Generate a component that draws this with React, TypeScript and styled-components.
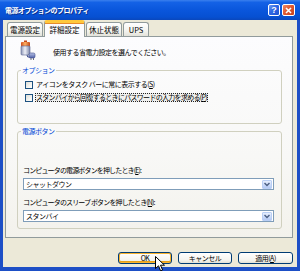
import React from 'react';
import styled, { createGlobalStyle, css } from 'styled-components';

const GlobalStyle = createGlobalStyle`
  html, body {
    margin: 0;
    padding: 0;
    width: 300px;
    height: 271px;
    overflow: hidden;
    background: #ECE9D8;
  }
  * {
    box-sizing: border-box;
  }
`;

const font = `'Noto Sans CJK JP', 'Liberation Sans', sans-serif`;

const Window = styled.div`
  position: relative;
  width: 300px;
  height: 271px;
  display: flex;
  flex-direction: column;
  background: #1d4fc6;
  font-family: ${font};
  font-size: 7px;
  letter-spacing: -0.5px;
  color: #000;
`;

const TitleBar = styled.div`
  height: 20px;
  flex: none;
  display: flex;
  align-items: center;
  justify-content: space-between;
  padding: 0 5px 0 5px;
  background: linear-gradient(
    to bottom,
    #3a80ee 0%,
    #1462e6 12%,
    #0a56dc 50%,
    #0650d2 85%,
    #0a47bc 100%
  );
`;

const Title = styled.div`
  color: #fff;
  font-weight: bold;
  font-size: 7px;
  line-height: 10px;
  text-shadow: 1px 1px 0 #0b2f8a;
`;

const CaptionButtons = styled.div`
  display: flex;
  gap: 2px;
`;

const CaptionButton = styled.div<{ $close?: boolean }>`
  width: 12px;
  height: 12px;
  border: 1px solid #fff;
  border-radius: 2px;
  display: flex;
  align-items: center;
  justify-content: center;
  color: #fff;
  font-family: 'Liberation Sans', sans-serif;
  font-weight: bold;
  font-size: 9px;
  letter-spacing: 0;
  line-height: 10px;
  ${({ $close }) =>
    $close
      ? css`
          width: 13px;
          background: linear-gradient(135deg, #ef8a68 0%, #e05a32 45%, #c9401c 100%);
        `
      : css`
          background: linear-gradient(135deg, #6e9af0 0%, #2e67e4 45%, #1f53d0 100%);
        `}
`;

const Body = styled.div`
  flex: 1;
  display: flex;
  flex-direction: column;
  margin: 0 3px 4px 3px;
  padding: 0 4px 3px 2px;
  background: #ece9d8;
`;

const TabStrip = styled.div`
  height: 16px;
  display: flex;
  align-items: flex-end;
  padding-left: 2px;
  gap: 1px;
  position: relative;
  z-index: 1;
`;

const Tab = styled.div<{ $active?: boolean; $w: number }>`
  width: ${({ $w }) => $w}px;
  height: 14px;
  display: flex;
  align-items: center;
  justify-content: center;
  border: 1px solid #919b9c;
  border-bottom: none;
  border-radius: 3px 3px 0 0;
  background: linear-gradient(to bottom, #ffffff 0%, #f3f3ef 60%, #e3e2da 100%);
  white-space: nowrap;
  font-size: 7.5px;
  letter-spacing: 0;
  line-height: 10px;
  ${({ $active }) =>
    $active &&
    css`
      height: 17px;
      margin-bottom: -1px;
      padding-bottom: 1px;
      background: #fcfcfe;
      border-top: 3px solid #ffc83c;
      box-shadow: inset 0 1px 0 #e68b2c;
    `}
`;

const Panel = styled.div`
  height: 202px;
  display: flex;
  flex-direction: column;
  border: 1px solid #919b9c;
  padding: 3px 10px 0 11px;
  background: linear-gradient(to bottom, #fcfcfe 0%, #f8f8f6 60%, #f3f2ec 100%);
`;

const Intro = styled.div`
  height: 20px;
  display: flex;
  align-items: flex-start;
  padding-left: 1px;
`;

const IntroText = styled.div`
  margin-left: 16px;
  padding-top: 8px;
  line-height: 9px;
`;

const Group = styled.fieldset<{ $top: number; $height: number }>`
  margin: ${({ $top }) => $top}px 0 0 0;
  height: ${({ $height }) => $height}px;
  padding: 0 7px 0 5px;
  border: 1px solid #d0d0bf;
  border-radius: 3px;
  display: flex;
  flex-direction: column;
  min-width: 0;
`;

const Legend = styled.legend`
  color: #0046d5;
  padding: 0 1px;
  margin-left: -2px;
  line-height: 9px;
`;

const CheckRow = styled.label<{ $top: number }>`
  display: flex;
  align-items: center;
  height: 9px;
  margin: ${({ $top }) => $top}px 0 0 2px;
  line-height: 9px;
  white-space: nowrap;
`;

const CheckBox = styled.span`
  width: 8px;
  height: 8px;
  flex: none;
  border: 1px solid #1c5180;
  background: linear-gradient(135deg, #dcdcd6 0%, #f4f4f0 60%, #ffffff 100%);
  margin-right: 2px;
`;

const CheckText = styled.span<{ $focus?: boolean }>`
  padding: 0 1px;
  ${({ $focus }) =>
    $focus &&
    css`
      letter-spacing: -0.7px;
      outline: 1px dotted #222;
      outline-offset: -1px;
      background: #f0f0ee;
    `}
`;

const FieldLabel = styled.div<{ $top: number }>`
  margin-top: ${({ $top }) => $top}px;
  line-height: 9px;
  letter-spacing: -0.85px;
  white-space: nowrap;
`;

const Combo = styled.div<{ $top: number }>`
  margin-top: ${({ $top }) => $top}px;
  height: 12px;
  display: flex;
  align-items: center;
  border: 1px solid #7f9db9;
  background: #fff;
  padding: 0 1px 0 2px;
`;

const ComboValue = styled.span`
  flex: 1;
  line-height: 9px;
`;

const ComboButton = styled.span`
  width: 10px;
  height: 9px;
  display: flex;
  align-items: center;
  justify-content: center;
  border: 1px solid #b9cff5;
  border-radius: 1px;
  background: linear-gradient(to bottom, #e6eefc 0%, #c9dafa 60%, #b4c9f3 100%);
`;

const ButtonRow = styled.div`
  display: flex;
  justify-content: flex-end;
  gap: 6px;
  margin-top: 14px;
`;

const Button = styled.div<{ $hover?: boolean; $w: number }>`
  width: ${({ $w }) => $w}px;
  height: 12px;
  display: flex;
  align-items: center;
  justify-content: center;
  border: 1px solid #003c74;
  border-radius: 3px;
  background: linear-gradient(to bottom, #ffffff 0%, #f5f4ef 70%, #e3e1d6 100%);
  line-height: 9px;
  ${({ $hover }) =>
    $hover &&
    css`
      box-shadow: inset 0 0 0 1px #f8b330, inset 0 -1px 0 1px #e5a01a;
    `}
`;

const Cursor = styled.svg`
  position: absolute;
  left: 155px;
  top: 256px;
`;

const Chevron = () => (
  <svg width="6" height="5" viewBox="0 0 6 5">
    <path d="M0.5 1 L3 3.6 L5.5 1" fill="none" stroke="#4d6185" strokeWidth="1.4" />
  </svg>
);

const PowerIcon = () => (
  <svg width="19" height="20" viewBox="0 0 19 20">
    <defs>
      <linearGradient id="bat" x1="0" x2="1" y1="0" y2="0">
        <stop offset="0" stopColor="#8c95b5" />
        <stop offset="0.45" stopColor="#eef0f8" />
        <stop offset="1" stopColor="#7b84a6" />
      </linearGradient>
      <linearGradient id="cap" x1="0" x2="1" y1="0" y2="0">
        <stop offset="0" stopColor="#d04a1c" />
        <stop offset="0.45" stopColor="#ffb060" />
        <stop offset="1" stopColor="#c2461a" />
      </linearGradient>
      <linearGradient id="plug" x1="0" x2="0" y1="0" y2="1">
        <stop offset="0" stopColor="#b9c3e6" />
        <stop offset="1" stopColor="#4d5fa8" />
      </linearGradient>
    </defs>
    <rect x="6" y="0.5" width="3" height="1.5" fill="#c2461a" />
    <rect x="3" y="2" width="9" height="5" rx="1" fill="url(#cap)" />
    <rect x="3" y="6" width="9" height="9" rx="1" fill="url(#bat)" stroke="#5b6590" strokeWidth="0.6" />
    <path d="M9 15 Q9 18 12 17" fill="none" stroke="#3d4c8c" strokeWidth="1" />
    <rect x="11" y="13" width="6" height="5" rx="1.5" fill="url(#plug)" stroke="#3d4c8c" strokeWidth="0.6" />
    <rect x="12.5" y="18" width="1" height="2" fill="#6b6f7d" />
    <rect x="15" y="18" width="1" height="2" fill="#6b6f7d" />
  </svg>
);

const App = () => (
  <>
    <GlobalStyle />
    <Window>
      <TitleBar>
        <Title>電源オプションのプロパティ</Title>
        <CaptionButtons>
          <CaptionButton>?</CaptionButton>
          <CaptionButton $close>
            <svg width="7" height="7" viewBox="0 0 7 7">
              <path d="M1 1 L6 6 M6 1 L1 6" stroke="#fff" strokeWidth="1.6" />
            </svg>
          </CaptionButton>
        </CaptionButtons>
      </TitleBar>
      <Body>
        <TabStrip>
          <Tab $w={36}>電源設定</Tab>
          <Tab $w={41} $active>
            詳細設定
          </Tab>
          <Tab $w={36}>休止状態</Tab>
          <Tab $w={26}>UPS</Tab>
        </TabStrip>
        <Panel>
          <Intro>
            <PowerIcon />
            <IntroText>使用する省電力設定を選んでください。</IntroText>
          </Intro>
          <Group $top={6} $height={58}>
            <Legend>オプション</Legend>
            <CheckRow $top={5}>
              <CheckBox />
              <CheckText>
                アイコンをタスク バーに常に表示する(<u>S</u>)
              </CheckText>
            </CheckRow>
            <CheckRow $top={4}>
              <CheckBox />
              <CheckText $focus>
                スタンバイから回復するときにパスワードの入力を求める(<u>P</u>)
              </CheckText>
            </CheckRow>
          </Group>
          <Group $top={3} $height={102}>
            <Legend>電源ボタン</Legend>
            <FieldLabel $top={30}>
              コンピュータの電源ボタンを押したとき(<u>E</u>):
            </FieldLabel>
            <Combo $top={3}>
              <ComboValue>シャットダウン</ComboValue>
              <ComboButton>
                <Chevron />
              </ComboButton>
            </Combo>
            <FieldLabel $top={8}>
              コンピュータのスリープ ボタンを押したとき(<u>N</u>):
            </FieldLabel>
            <Combo $top={3}>
              <ComboValue>スタンバイ</ComboValue>
              <ComboButton>
                <Chevron />
              </ComboButton>
            </Combo>
          </Group>
        </Panel>
        <ButtonRow>
          <Button $w={54} $hover>
            OK
          </Button>
          <Button $w={54}>キャンセル</Button>
          <Button $w={55}>
            適用(<u>A</u>)
          </Button>
        </ButtonRow>
      </Body>
      <Cursor width="11" height="16" viewBox="0 0 11 16">
        <path
          d="M0.5 0.5 L0.5 12.5 L3.5 9.8 L5.6 14.8 L7.6 14 L5.5 9.2 L9.5 9.2 Z"
          fill="#fff"
          stroke="#000"
          strokeWidth="1"
          strokeLinejoin="round"
        />
      </Cursor>
    </Window>
  </>
);

export default App;
